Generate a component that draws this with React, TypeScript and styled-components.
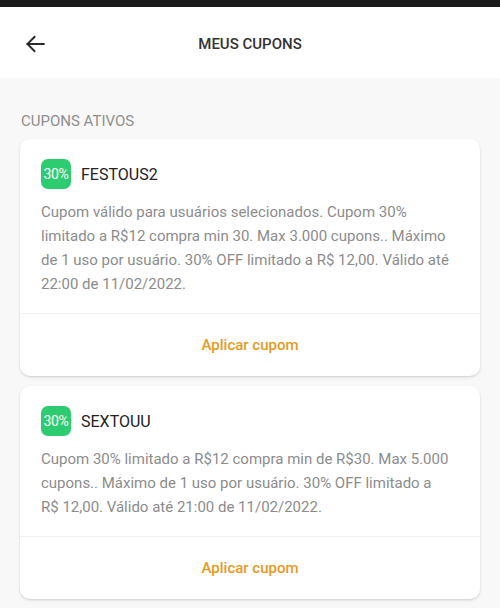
import React from 'react';
import styled, { createGlobalStyle } from 'styled-components';

const GlobalStyle = createGlobalStyle`
  html, body {
    margin: 0;
    padding: 0;
    background: #f8f8f8;
  }
  body {
    font-family: Roboto, "Liberation Sans", Arial, sans-serif;
    -webkit-font-smoothing: antialiased;
  }
`;

interface Coupon {
  id: number;
  discount: string;
  code: string;
  description: string;
}

// R$ and value kept together with a non-breaking space
const coupons: Coupon[] = [
  {
    id: 1,
    discount: '30%',
    code: 'FESTOUS2',
    description:
      'Cupom válido para usuários selecionados. Cupom 30% limitado a R$12 compra min 30. Max 3.000 cupons.. Máximo de 1 uso por usuário. 30% OFF limitado a R$\u00a012,00. Válido até 22:00 de 11/02/2022.',
  },
  {
    id: 2,
    discount: '30%',
    code: 'SEXTOUU',
    description:
      'Cupom 30% limitado a R$12 compra min de R$30. Max 5.000 cupons.. Máximo de 1 uso por usuário. 30% OFF limitado a R$\u00a012,00. Válido até 21:00 de 11/02/2022.',
  },
];

const Screen = styled.div`
  min-height: 608px;
  background: #f8f8f8;
  display: flex;
  flex-direction: column;
`;

const StatusBar = styled.div`
  height: 7px;
  background: #1b1b1b;
`;

const Header = styled.header`
  height: 71px;
  background: #ffffff;
  display: grid;
  grid-template-columns: 70px 1fr 70px;
  align-items: center;
`;

const BackButton = styled.button`
  border: none;
  background: transparent;
  padding: 0 0 0 22px;
  display: flex;
  align-items: center;
  color: #2a2a2a;
  cursor: pointer;
  margin-top: 2px;
`;

const Title = styled.h1`
  margin: 2px 0 0;
  text-align: center;
  font-size: 15px;
  font-weight: 500;
  color: #333;
`;

const Content = styled.main`
  padding: 35px 20px 10px;
  display: flex;
  flex-direction: column;
  gap: 10px;
`;

const SectionTitle = styled.h2`
  margin: 0 0 0 1px;
  font-size: 15px;
  font-weight: 400;
  color: #8f8f8f;
  line-height: 16px;
`;

const Card = styled.section`
  background: #ffffff;
  border-radius: 10px;
  box-shadow: 0 1px 2px rgba(0, 0, 0, 0.12), 0 2px 4px rgba(0, 0, 0, 0.05);
  overflow: hidden;
`;

const CardBody = styled.div`
  padding: 20px 21px 17px;
  border-bottom: 1px solid #f1f1f1;
`;

const CardHead = styled.div`
  display: flex;
  align-items: center;
  gap: 10px;
  margin-bottom: 11px;
`;

const Badge = styled.span`
  width: 30px;
  height: 30px;
  border-radius: 7px;
  background: #2ecc71;
  color: #ffffff;
  font-size: 14px;
  display: flex;
  align-items: center;
  justify-content: center;
  letter-spacing: -0.3px;
`;

const Code = styled.span`
  font-size: 16px;
  color: #222;
  font-weight: 400;
`;

const Description = styled.p`
  margin: 0;
  font-size: 15px;
  line-height: 24px;
  color: #8c8c8c;
`;

const ApplyButton = styled.button`
  display: block;
  width: 100%;
  height: 62px;
  border: none;
  background: transparent;
  font-family: inherit;
  font-size: 15px;
  font-weight: 500;
  color: #e89a1f;
  cursor: pointer;
`;

const BackIcon = () => (
  <svg width="26" height="26" viewBox="0 0 24 24" fill="none">
    <path
      d="M20 12H5M11.5 5.5L5 12l6.5 6.5"
      stroke="currentColor"
      strokeWidth="1.8"
      strokeLinecap="square"
    />
  </svg>
);

const App: React.FC = () => {
  return (
    <>
      <GlobalStyle />
      <Screen>
        <StatusBar />
        <Header>
          <BackButton aria-label="Voltar">
            <BackIcon />
          </BackButton>
          <Title>MEUS CUPONS</Title>
          <span />
        </Header>
        <Content>
          <SectionTitle>CUPONS ATIVOS</SectionTitle>
          {coupons.map((c) => (
            <Card key={c.id}>
              <CardBody>
                <CardHead>
                  <Badge>{c.discount}</Badge>
                  <Code>{c.code}</Code>
                </CardHead>
                <Description>{c.description}</Description>
              </CardBody>
              <ApplyButton>Aplicar cupom</ApplyButton>
            </Card>
          ))}
        </Content>
      </Screen>
    </>
  );
};

export default App;
